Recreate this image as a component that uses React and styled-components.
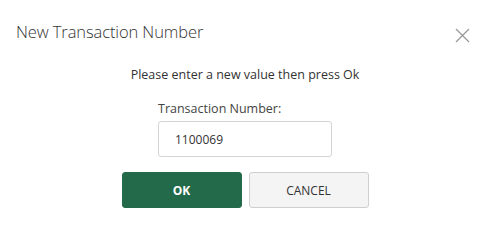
import React from 'react';
import styled, { createGlobalStyle } from 'styled-components';

const GlobalStyle = createGlobalStyle`
  html, body {
    margin: 0;
    padding: 0;
    background: #ffffff;
  }
  body {
    font-family: "Open Sans", "Noto Sans", sans-serif;
    color: #333333;
  }
`;

const Dialog = styled.div`
  width: 482px;
  height: 221px;
  box-sizing: border-box;
  background: #ffffff;
  display: flex;
  flex-direction: column;
`;

const Header = styled.div`
  display: flex;
  align-items: center;
  justify-content: space-between;
  padding: 19px 12px 0 16px;
  height: 24px;
`;

const Title = styled.h1`
  margin: 0;
  font-size: 16.5px;
  font-weight: 300;
  color: #333333;
  letter-spacing: -0.1px;
`;

const CloseButton = styled.button`
  border: 0;
  background: transparent;
  padding: 0;
  width: 16px;
  height: 16px;
  display: flex;
  align-items: center;
  justify-content: center;
  cursor: pointer;
  margin-top: 8px;
`;

const Body = styled.div`
  display: flex;
  flex-direction: column;
  align-items: center;
  padding: 0 8px 0 16px;
`;

const Message = styled.p`
  margin: 24px 0 0;
  font-size: 12.5px;
  color: #333333;
  line-height: 16px;
`;

const Field = styled.label`
  display: flex;
  flex-direction: column;
  margin-top: 18px;
  width: 174px;
`;

const FieldLabel = styled.span`
  font-size: 12.5px;
  color: #444444;
  line-height: 16px;
`;

const Input = styled.input`
  margin-top: 4px;
  box-sizing: border-box;
  width: 174px;
  height: 36px;
  border: 1px solid #d4d4d4;
  border-radius: 3px;
  padding: 0 16px;
  font-family: inherit;
  font-size: 12px;
  color: #333333;
  outline: none;
`;

const Actions = styled.div`
  display: flex;
  gap: 7px;
  margin-top: 15px;
`;

const Button = styled.button`
  box-sizing: border-box;
  width: 120px;
  height: 36px;
  border-radius: 3px;
  font-family: inherit;
  font-size: 12px;
  cursor: pointer;
  border: 1px solid ${p => (p.$primary ? '#236a4a' : '#cfcfcf')};
  background: ${p => (p.$primary ? '#236a4a' : '#f4f4f4')};
  color: ${p => (p.$primary ? '#ffffff' : '#333333')};
  font-weight: ${p => (p.$primary ? 700 : 400)};
`;

export default function App() {
  return (
    <>
      <GlobalStyle />
      <Dialog>
        <Header>
          <Title>New Transaction Number</Title>
          <CloseButton aria-label="Close">
            <svg width="15" height="15" viewBox="0 0 15 15">
              <path d="M1 1L14 14M14 1L1 14" stroke="#9a9a9a" strokeWidth="1.3" fill="none" />
            </svg>
          </CloseButton>
        </Header>
        <Body>
          <Message>Please enter a new value then press Ok</Message>
          <Field>
            <FieldLabel>Transaction Number:</FieldLabel>
            <Input defaultValue="1100069" />
          </Field>
          <Actions>
            <Button $primary>OK</Button>
            <Button>CANCEL</Button>
          </Actions>
        </Body>
      </Dialog>
    </>
  );
}
